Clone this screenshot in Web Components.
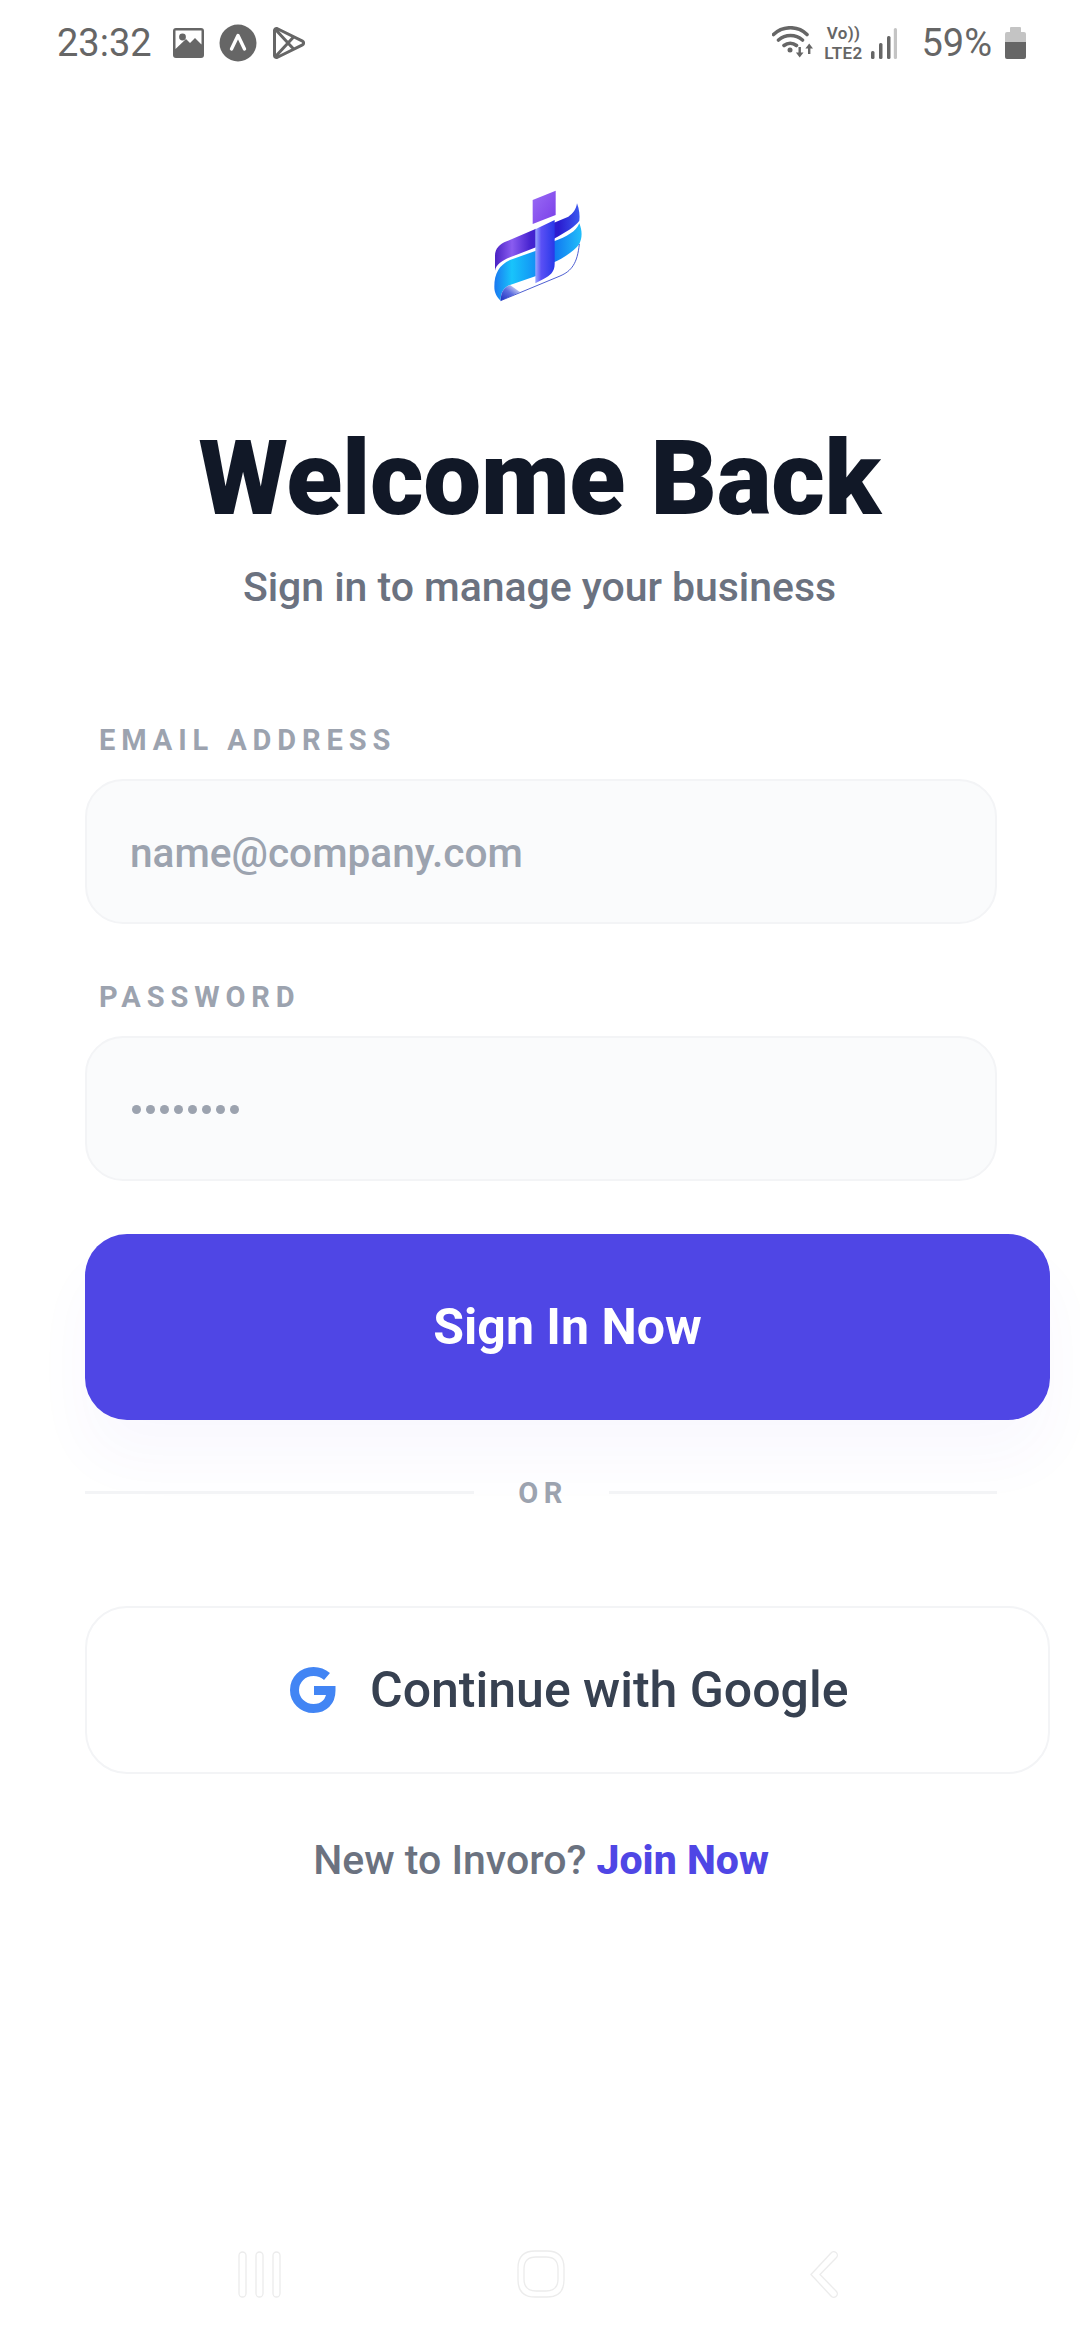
<!DOCTYPE html>
<html>
<head>
<meta charset="utf-8">
<title>Sign in</title>
<style>
  html, body { margin: 0; padding: 0; background: #ffffff; }
  body { font-family: Roboto, "Liberation Sans", sans-serif; }
</style>
</head>
<body>
<login-page>
  <status-bar slot="top"></status-bar>
  <app-logo></app-logo>
  <page-heading title="Welcome Back" sub="Sign in to manage your business"></page-heading>
  <form-field label="EMAIL ADDRESS" offset="110">name@company.com</form-field>
  <form-field label="PASSWORD" offset="56" type="password"></form-field>
  <primary-button>Sign In Now</primary-button>
  <or-divider>OR</or-divider>
  <google-button>Continue with Google</google-button>
  <join-line></join-line>
  <nav-bar slot="bottom"></nav-bar>
</login-page>

<script>
class LoginPage extends HTMLElement {
    constructor() {
        super();
        this.attachShadow({ mode: "open" }).innerHTML = `
          <style>
            :host { display: flex; flex-direction: column; width: 1080px; height: 2340px; overflow: hidden; background: #fff; }
            main { flex: 1; display: flex; flex-direction: column; padding: 0 0 0 85px; }
          </style>
          <slot name="top"></slot>
          <main><slot></slot></main>
          <slot name="bottom"></slot>`;
    }
}

class StatusBar extends HTMLElement {
    constructor() {
        super();
        this.attachShadow({ mode: "open" }).innerHTML = `
          <style>
            :host { display: flex; align-items: center; height: 86px; padding: 0 54px 0 57px; color: #666; font-size: 38px; box-sizing: border-box; }
            .time { width: 116px; }
            .left { display: flex; align-items: center; }
            .right { margin-left: auto; display: flex; align-items: center; }
            svg { display: block; }
            .lte { display: flex; flex-direction: column; align-items: center; width: 42px; font-size: 17px; font-weight: 600; letter-spacing: .3px; line-height: 20px; margin: 0 7px 0 8px; }
            .lte span { display: block; height: 20px; }
            .pct { margin: 0 13px 0 0; font-size: 38px; }
          </style>
          <div class="left">
            <span class="time">23:32</span>
            <svg width="31" height="30" viewBox="0 0 31 30">
              <path fill="#666" d="M3 0h25a3 3 0 0 1 3 3v24a3 3 0 0 1-3 3H3a3 3 0 0 1-3-3V3a3 3 0 0 1 3-3z"/>
              <path fill="#fff" d="M2.500 2.500h26v14l-6.500-6.500-5 5-4-4L2.500 21z"/>
              <circle cx="9.500" cy="9" r="3.400" fill="#666"/>
            </svg>
            <svg width="38" height="38" viewBox="0 0 38 38" style="margin-left:15px">
              <circle cx="19" cy="19" r="18.5" fill="#666"/>
              <path d="M12.5 25 19 11.5 25.500 25" fill="none" stroke="#fff" stroke-width="3.4" stroke-linecap="round" stroke-linejoin="round"/>
            </svg>
            <svg width="32" height="34" viewBox="0 0 32 34" style="margin-left:16px">
              <path d="M4 2.500 29.500 15.200a2 2 0 0 1 0 3.600L4 31.500a2 2 0 0 1-2.500-2V4.500a2 2 0 0 1 2.500-2zM2.500 3.500 21.500 24M2.500 30.500 21.500 10" fill="none" stroke="#666" stroke-width="3" stroke-linejoin="round"/>
            </svg>
          </div>
          <div class="right">
            <svg width="42" height="34" viewBox="0 0 42 34">
              <path d="M1.500 8.500C11 -0.500 26 -0.500 35 8.500M6.500 14c7-6 17-6 24 0M12 19.500c3.800-3 8.700-3 12.500 0" fill="none" stroke="#666" stroke-width="3.600" stroke-linecap="round"/>
              <circle cx="18" cy="24" r="2.500" fill="#666"/>
              <path fill="#666" d="M26.500 21h2.400v5.500h2.600l-3.800 5-3.800-5h2.600z"/>
              <path fill="#666" d="M36 28h2.400v-5.500H41l-3.800-5-3.800 5H36z"/>
            </svg>
            <span class="lte"><span>Vo))</span><span>LTE2</span></span>
            <svg width="26" height="31" viewBox="0 0 26 31" style="margin-right:24px">
              <rect x="0" y="23" width="3.500" height="8" rx="1.500" fill="#666"/>
              <rect x="8" y="15" width="3.500" height="16" rx="1.500" fill="#666"/>
              <rect x="16" y="8" width="3.500" height="23" rx="1.500" fill="#666"/>
              <rect x="22.800" y="0" width="3.200" height="31" rx="1.500" fill="#c4c4c4"/>
            </svg>
            <span class="pct">59%</span>
            <svg width="21" height="32" viewBox="0 0 21 32">
              <path fill="#c4c4c4" d="M6 0h9a1 1 0 0 1 1 1v4h3a2 2 0 0 1 2 2v12H0V7a2 2 0 0 1 2-2h3V1a1 1 0 0 1 1-1z"/>
              <path fill="#666" d="M0 15h21v15a2 2 0 0 1-2 2H2a2 2 0 0 1-2-2z"/>
            </svg>
          </div>`;
    }
}

class AppLogo extends HTMLElement {
    constructor() {
        super();
        this.attachShadow({ mode: "open" }).innerHTML = `
          <style>
            :host { display: block; width: 150px; height: 150px; margin: 84px 0 0 375px; }
            svg { display: block; }
          </style>
          <svg width="150" height="150" viewBox="0 0 450 450">
            <defs>
              <linearGradient id="top" x1="0" y1="0" x2="1" y2="1"><stop offset="0" stop-color="#9a6cf5"/><stop offset="1" stop-color="#7a3ee8"/></linearGradient>
              <linearGradient id="band" gradientUnits="userSpaceOnUse" x1="105" y1="0" x2="360" y2="0"><stop offset="0" stop-color="#4a22c4"/><stop offset=".2" stop-color="#8a5cf0"/><stop offset=".42" stop-color="#4522cf"/><stop offset=".75" stop-color="#2a1cd0"/><stop offset="1" stop-color="#3c5af0"/></linearGradient>
              <linearGradient id="cyan" gradientUnits="userSpaceOnUse" x1="103" y1="0" x2="366" y2="0"><stop offset="0" stop-color="#1a78f0"/><stop offset=".2" stop-color="#18c4fb"/><stop offset=".65" stop-color="#0f70f0"/><stop offset="1" stop-color="#22c0fa"/></linearGradient>
              <linearGradient id="stem" x1="0" y1="0" x2="1" y2="0"><stop offset="0" stop-color="#9aa8ff"/><stop offset=".3" stop-color="#5a50f5"/><stop offset="1" stop-color="#2838e8"/></linearGradient>
              <linearGradient id="foot" x1="0" y1="1" x2="1" y2="0"><stop offset="0" stop-color="#1d2fc0"/><stop offset=".5" stop-color="#5f6fe0"/><stop offset="1" stop-color="#ffffff"/></linearGradient>
            </defs>
            <path fill="url(#band)" d="M105 302V258C105 235 120 222 140 214L228 176V232L150 262C125 272 108 285 105 302Z"/>
            <path fill="url(#band)" d="M282 158 325 140C340 130 348 118 351 100C358 118 360 138 358 152C345 170 320 185 282 206Z"/>
            <path fill="url(#cyan)" d="M103 350C103 310 118 285 150 270L228 242V318L150 345C130 352 122 370 122 392C110 380 103 368 103 350Z"/>
            <path fill="url(#cyan)" d="M282 214C320 200 348 185 358 160C368 185 366 205 358 222C345 240 315 262 282 277Z"/>
            <path fill="url(#foot)" d="M122 392C122 370 130 352 150 345L180 366Z"/>
            <path fill="none" stroke="#2a3fc8" stroke-width="2.500" d="M122 392 300 318C335 303 352 280 358 222"/>
            <path fill="url(#top)" d="M218 90 287 62V135L218 162Z"/>
            <path fill="url(#stem)" d="M226 178 284 150V282C284 305 270 318 252 326L226 340Z"/>
          </svg>`;
    }
}

class PageHeading extends HTMLElement {
    constructor() {
        super();
        this.attachShadow({ mode: "open" }).innerHTML = `
          <style>
            :host { display: block; margin: 99px 0 0 -85px; width: 1080px; text-align: center; }
            h1 { margin: 0 0 0 -1px; font-size: 103px; font-weight: 900; letter-spacing: -0.3px; line-height: 120px; color: #111827; }
            p { margin: 22px 0 0 -1px; font-size: 41px; font-weight: 460; letter-spacing: -0.05px; line-height: 52px; color: #6b7280; }
          </style>
          <h1>${this.getAttribute("title")}</h1>
          <p>${this.getAttribute("sub")}</p>`;
    }
}

class FormField extends HTMLElement {
    constructor() {
        super();
        const dots = this.getAttribute("type") === "password"
            ? `<span class="dots">${"<i></i>".repeat(8)}</span>`
            : "<slot></slot>";
        this.attachShadow({ mode: "open" }).innerHTML = `
          <style>
            :host { display: block; width: 912px; margin-top: ${this.getAttribute("offset")}px; }
            label { display: block; height: 34px; margin: 0 0 22px 14px; font-size: 29px; font-weight: 700; line-height: 34px; color: #9ca3af; letter-spacing: 5.9px; }
            .box { display: flex; align-items: center; box-sizing: border-box; height: 145px; padding: 2px 43px 0; background: #fafbfc; border: 2px solid #f3f4f6; border-radius: 38px; font-size: 40.6px; font-weight: 500; color: #9ca3af; }
            .dots { display: flex; gap: 5px; padding: 0 2px; }
            i { display: block; width: 9px; height: 9px; border-radius: 50%; background: #9ca3af; }
          </style>
          <label>${this.getAttribute("label")}</label>
          <div class="box">${dots}</div>`;
    }
}

class PrimaryButton extends HTMLElement {
    constructor() {
        super();
        this.attachShadow({ mode: "open" }).innerHTML = `
          <style>
            :host { display: flex; align-items: center; justify-content: center; width: 965px; height: 186px; margin-top: 53px; border-radius: 42px; background: #4f46e5; color: #fff; font-size: 50px; font-weight: 700; box-shadow: 0 40px 60px rgba(79,70,229,.035); }
          </style>
          <slot></slot>`;
    }
}

class OrDivider extends HTMLElement {
    constructor() {
        super();
        this.attachShadow({ mode: "open" }).innerHTML = `
          <style>
            :host { display: flex; align-items: center; width: 912px; height: 34px; margin-top: 55px; font-size: 29px; font-weight: 700; letter-spacing: 5.5px; color: #9ca3af; }
            hr { flex: 1; margin: 0; border: 0; height: 3px; background: #f3f4f6; }
            span { width: 135px; text-align: center; padding: 2px 0 0 4px; box-sizing: border-box; }
          </style>
          <hr><span><slot></slot></span><hr>`;
    }
}

class GoogleButton extends HTMLElement {
    constructor() {
        super();
        this.attachShadow({ mode: "open" }).innerHTML = `
          <style>
            :host { display: flex; align-items: center; box-sizing: border-box; width: 965px; height: 168px; margin-top: 97px; padding-left: 203px; background: #fff; border: 2px solid #f3f4f6; border-radius: 42px; color: #374151; font-size: 50px; font-weight: 500; }
            svg { display: block; margin-right: 34px; }
          </style>
          <svg width="46" height="46" viewBox="0 0 46 46">
            <path fill="none" stroke="#4285f4" stroke-width="9" d="M37 9.500C33 6 28.500 4.500 23.500 4.500C12.500 4.500 4.500 13 4.500 23S12.500 41.500 23.500 41.500C34 41.500 41 34.500 41 23.500H24"/>
          </svg>
          <slot></slot>`;
    }
}

class JoinLine extends HTMLElement {
    constructor() {
        super();
        this.attachShadow({ mode: "open" }).innerHTML = `
          <style>
            :host { display: block; width: 912px; margin-top: 61px; font-size: 41px; font-weight: 500; line-height: 50px; color: #6b7280; text-align: center; }
            b { color: #4f46e5; font-weight: 800; }
          </style>
          New to Invoro? <b>Join Now</b>`;
    }
}

class NavBar extends HTMLElement {
    constructor() {
        super();
        this.attachShadow({ mode: "open" }).innerHTML = `
          <style>
            :host { display: flex; align-items: center; box-sizing: border-box; height: 48px; margin-bottom: 42px; padding-left: 238px; }
            svg { display: block; fill: #fff; stroke: #ececec; stroke-width: 1.300; }
          </style>
          <svg width="44" height="47" viewBox="0 0 44 47">
            <rect x="1" y="1" width="7" height="45" rx="3.500"/>
            <rect x="18" y="1" width="7" height="45" rx="3.500"/>
            <rect x="35" y="1" width="7" height="45" rx="3.500"/>
          </svg>
          <svg width="48" height="48" viewBox="0 0 48 48" style="margin-left:235px">
            <path fill-rule="evenodd" d="M18 1h12C41 1 47 7 47 18v12c0 11-6 17-17 17H18C7 47 1 41 1 30V18C1 7 7 1 18 1zM19 7C11 7 7 11 7 19v10c0 8 4 12 12 12h10c8 0 12-4 12-12V19c0-8-4-12-12-12z"/>
          </svg>
          <svg width="30" height="47" viewBox="0 0 30 47" style="margin-left:245px">
            <path d="M1 23.500 21 2a3.500 3.500 0 0 1 5.500 4.500L10 23.500 26.500 40.500A3.500 3.500 0 0 1 21 45z"/>
          </svg>`;
    }
}

customElements.define("login-page", LoginPage);
customElements.define("status-bar", StatusBar);
customElements.define("app-logo", AppLogo);
customElements.define("page-heading", PageHeading);
customElements.define("form-field", FormField);
customElements.define("primary-button", PrimaryButton);
customElements.define("or-divider", OrDivider);
customElements.define("google-button", GoogleButton);
customElements.define("join-line", JoinLine);
customElements.define("nav-bar", NavBar);
</script>
</body>
</html>
